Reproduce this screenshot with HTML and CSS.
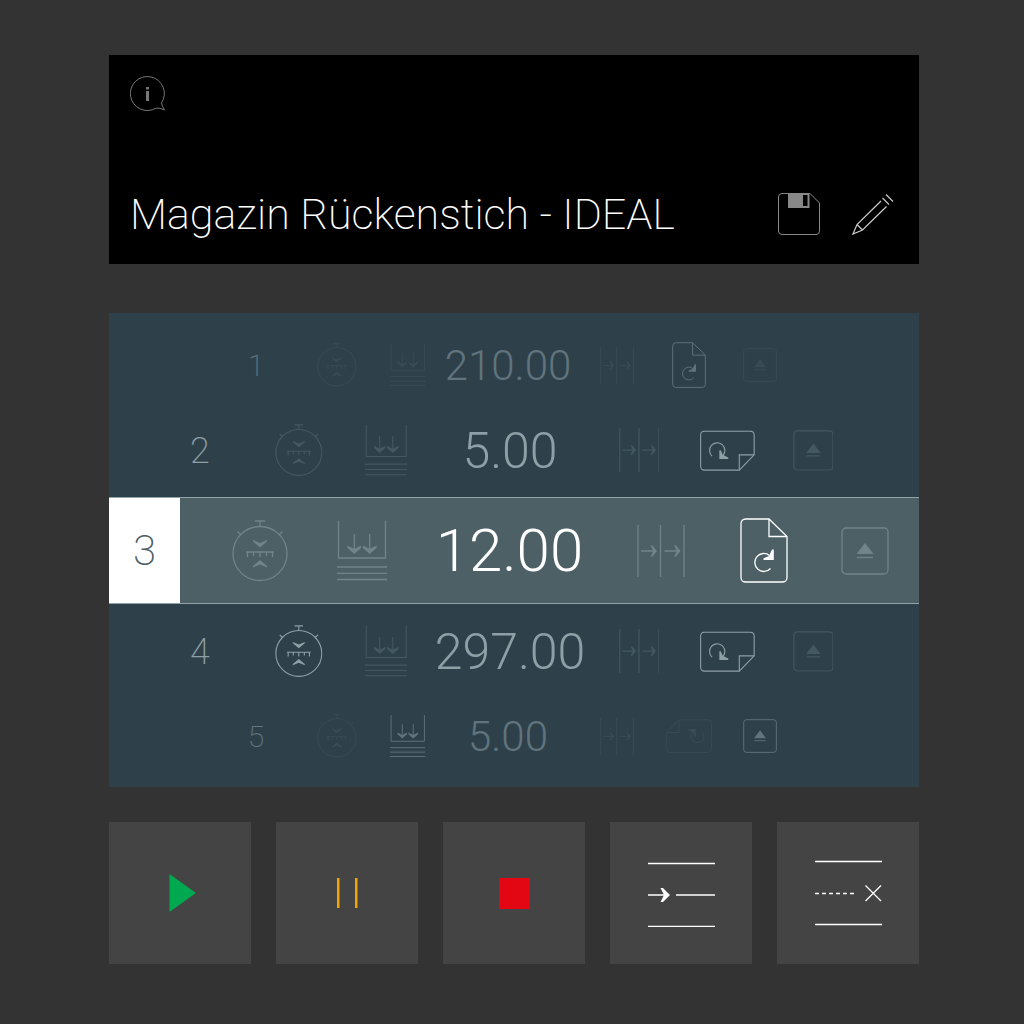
FILE: index.html
```html
<!DOCTYPE html>
<html lang="de">
<head>
    <meta charset="utf-8">
    <meta name="viewport" content="width=device-width, initial-scale=1">
    <title>Magazin Rückenstich - IDEAL</title>
    <link rel="stylesheet" href="styles.css">
</head>
<body>
    <!-- shared icons -->
    <svg class="sprite" aria-hidden="true">
        <symbol id="measure" viewBox="0 0 56 62">
            <circle cx="28" cy="33.5" r="27"/>
            <path d="M23 1H33M28 1V6.500M5.500 11.500L9 15M50.500 11.500L47 15"/>
            <path d="M14 32H42M15.500 32V37M21.500 32V36M28 32V37M34.500 32V36M40.500 32V37"/>
            <path class="solid" d="M21 20L28 23L35 20V21.500L28 27.500L21 21.500ZM21 47.500L28 44.500L35 47.500V46L28 40L21 46Z"/>
        </symbol>
        <symbol id="press" viewBox="0 0 50 60">
            <path d="M1.500 0V37H48.500V0M0 46H50M0 52.300H50M0 58.500H50M17.300 13V31M32.700 13V31"/>
            <path class="solid" d="M10.500 24.500L17.300 28L24 24.500V27L17.300 33L10.500 27ZM26 24.500L32.700 28L39.500 24.500V27L32.700 33L26 27Z"/>
        </symbol>
        <symbol id="feed" viewBox="0 0 48 52">
            <path d="M1 0V52M23.500 0V52M47 0V52M4 26H18M27.500 26H42"/>
            <path class="solid" d="M13.500 20.500H15.500L20 26L15.500 31.500H13.500L16.500 26ZM37 20.500H39L43.500 26L39 31.500H37L40 26Z"/>
        </symbol>
        <symbol id="sheet" viewBox="0 0 48 65">
            <path d="M5.500 1H29L47 18.500V59.500A4.500 4.500 0 0 1 42.500 64H5.500A4.500 4.500 0 0 1 1 59.500V5.500A4.500 4.500 0 0 1 5.500 1Z"/>
            <path d="M29 1V18.500H47"/>
            <path d="M30.500 50.500A9 9 0 1 1 29.500 37.500"/>
            <path class="solid" d="M32 31.500H33.800V42H23.500V40.300L29 38Z"/>
        </symbol>
        <symbol id="eject" viewBox="0 0 48 48">
            <rect x="1" y="1" width="46" height="46" rx="4"/>
            <path d="M16 30.500H32"/>
            <path class="solid" d="M15.500 27L24 16L32.500 27Z"/>
        </symbol>
    </svg>

    <main class="panel">
        <header class="job">
            <button class="icon-button" type="button" aria-label="Info">
                <svg class="info" width="36" height="36" viewBox="0 0 36 36">
                    <path d="M31.500 27A17 17 0 1 0 26 32.200Q29 31.500 34.500 34Q32 30 31.500 27Z"/>
                    <path class="solid" d="M16 11H19V13.500H16ZM16 15H19V25H16Z"/>
                </svg>
            </button>
            <div class="job-bar">
                <h1>Magazin Rückenstich - IDEAL</h1>
                <div class="job-actions">
                    <button class="icon-button" type="button" aria-label="Speichern">
                        <svg class="save" width="42" height="42" viewBox="0 0 42 42">
                            <path d="M4 .500H32L41.500 10V38A3.500 3.500 0 0 1 38 41.500H4A3.500 3.500 0 0 1 .500 38V4A3.500 3.500 0 0 1 4 .500Z"/>
                            <path class="solid" fill-rule="evenodd" d="M10 0H31.500V15H10ZM25 2V13H29.500V2Z"/>
                        </svg>
                    </button>
                    <button class="icon-button" type="button" aria-label="Bearbeiten">
                        <svg class="edit" width="42" height="42" viewBox="0 0 42 42">
                            <path d="M29 8L5 31.500L1 41L10.500 37L34.500 13.500M5 31.500L10.500 37M30.500 5L37 11.500M34 1.500L41 8.500"/>
                        </svg>
                    </button>
                </div>
            </div>
        </header>

        <ol class="steps">
            <li class="step far">
                <span class="number">1</span>
                <button type="button" aria-label="Messen"><svg class="measure"><use href="#measure"/></svg></button>
                <button type="button" aria-label="Pressen"><svg class="press"><use href="#press"/></svg></button>
                <span class="value">210.00</span>
                <button type="button" aria-label="Vorschub"><svg class="feed"><use href="#feed"/></svg></button>
                <button class="on" type="button" aria-label="Drehen"><svg class="sheet"><use href="#sheet"/></svg></button>
                <button type="button" aria-label="Auswerfen"><svg class="eject"><use href="#eject"/></svg></button>
            </li>
            <li class="step near">
                <span class="number">2</span>
                <button type="button" aria-label="Messen"><svg class="measure"><use href="#measure"/></svg></button>
                <button type="button" aria-label="Pressen"><svg class="press"><use href="#press"/></svg></button>
                <span class="value">5.00</span>
                <button type="button" aria-label="Vorschub"><svg class="feed"><use href="#feed"/></svg></button>
                <button class="on" type="button" aria-label="Drehen"><svg class="sheet turn-right"><use href="#sheet"/></svg></button>
                <button type="button" aria-label="Auswerfen"><svg class="eject"><use href="#eject"/></svg></button>
            </li>
            <li class="step current" aria-current="step">
                <span class="number">3</span>
                <button type="button" aria-label="Messen"><svg class="measure"><use href="#measure"/></svg></button>
                <button type="button" aria-label="Pressen"><svg class="press"><use href="#press"/></svg></button>
                <span class="value">12.00</span>
                <button type="button" aria-label="Vorschub"><svg class="feed"><use href="#feed"/></svg></button>
                <button class="on" type="button" aria-label="Drehen"><svg class="sheet"><use href="#sheet"/></svg></button>
                <button type="button" aria-label="Auswerfen"><svg class="eject"><use href="#eject"/></svg></button>
            </li>
            <li class="step near">
                <span class="number">4</span>
                <button class="on" type="button" aria-label="Messen"><svg class="measure"><use href="#measure"/></svg></button>
                <button type="button" aria-label="Pressen"><svg class="press"><use href="#press"/></svg></button>
                <span class="value">297.00</span>
                <button type="button" aria-label="Vorschub"><svg class="feed"><use href="#feed"/></svg></button>
                <button class="on" type="button" aria-label="Drehen"><svg class="sheet turn-right"><use href="#sheet"/></svg></button>
                <button type="button" aria-label="Auswerfen"><svg class="eject"><use href="#eject"/></svg></button>
            </li>
            <li class="step far">
                <span class="number">5</span>
                <button type="button" aria-label="Messen"><svg class="measure"><use href="#measure"/></svg></button>
                <button class="on" type="button" aria-label="Pressen"><svg class="press"><use href="#press"/></svg></button>
                <span class="value">5.00</span>
                <button type="button" aria-label="Vorschub"><svg class="feed"><use href="#feed"/></svg></button>
                <button type="button" aria-label="Drehen"><svg class="sheet turn-left"><use href="#sheet"/></svg></button>
                <button class="on" type="button" aria-label="Auswerfen"><svg class="eject"><use href="#eject"/></svg></button>
            </li>
        </ol>

        <div class="controls">
            <button class="control play" type="button" aria-label="Start">
                <svg width="32" height="38" viewBox="0 0 32 38"><path class="solid" d="M5.500 0L32 19L5.500 38Z"/></svg>
            </button>
            <button class="control pause" type="button" aria-label="Pause">
                <svg width="22" height="30" viewBox="0 0 22 30"><path class="solid" d="M1 0H3.500V30H1ZM19 0H21.500V30H19Z"/></svg>
            </button>
            <button class="control stop" type="button" aria-label="Stopp">
                <svg width="31" height="31" viewBox="0 0 31 31"><path class="solid" d="M0 0H31V31H0Z"/></svg>
            </button>
            <button class="control" type="button" aria-label="Schritt einfügen">
                <svg width="67" height="68" viewBox="0 0 67 68">
                    <path d="M0 4.500H67M0 36H18M28 36H67M0 67.300H67"/>
                    <path class="solid" d="M12.500 29H15L22 36L15 43H12.500L16 36Z"/>
                </svg>
            </button>
            <button class="control" type="button" aria-label="Schritt löschen">
                <svg width="67" height="68" viewBox="0 0 67 68">
                    <path d="M0 2.500H67M0 65.500H67M50.500 26.500L66 42M66 26.500L50.500 42"/>
                    <path stroke-dasharray="4 3" d="M0 34.500H40"/>
                </svg>
            </button>
        </div>
    </main>
</body>
</html>
```

FILE: styles.css
```css
* {
    box-sizing: border-box;
}
body {
    margin: 0;
    background: #333;
    color: #fff;
    font-family: Roboto, "Liberation Sans", sans-serif;
    font-weight: 200;
}
button {
    padding: 0;
    border: 0;
    background: none;
    color: inherit;
    font: inherit;
    cursor: pointer;
}
svg {
    display: block;
    fill: none;
    stroke: currentColor;
    stroke-width: 1.3;
}
.solid {
    fill: currentColor;
    stroke: none;
}
.sprite {
    position: absolute;
    width: 0;
    height: 0;
}
.panel {
    padding: 55px 105px 60px 109px;
}

/* job header */
.job {
    display: flex;
    flex-direction: column;
    align-items: flex-start;
    justify-content: space-between;
    min-height: 209px;
    padding: 21px 25px 25px 21px;
    background: #000;
}
.job-bar {
    display: flex;
    align-items: center;
    justify-content: space-between;
    width: 100%;
}
h1 {
    margin: 0;
    font-size: 43px;
    line-height: 50px;
    font-weight: 200;
}
.job-actions {
    display: flex;
    gap: 32px;
}
.info {
    stroke-width: 1;
    color: #777;
}
.save {
    stroke-width: 1;
    color: #888;
}
.edit {
    stroke-width: 1.2;
    color: #ccc;
}

/* step wheel */
.steps {
    margin: 49px 0 35px;
    padding: 10px 0 8px;
    list-style: none;
    background: #2e414b;
}
.step {
    --scale: 1;
    display: grid;
    align-items: center;
    justify-items: center;
}
.number,
.value {
    white-space: nowrap;
}
.value {
    font-weight: 300;
}
.far {
    --scale: 0.71;
    grid-template-columns: 90fr 72fr 70fr 130fr 88fr 56fr 86fr;
    height: 85px;
    padding: 0 116px 0 102px;
    color: #61747d;
}
.near {
    --scale: 0.85;
    grid-template-columns: 100fr 98fr 76fr 172fr 86fr 90fr 82fr;
    height: 85px;
    padding: 0 65px 0 41px;
    color: #8f9fa6;
}
.current {
    grid-template-columns: 71px 131fr 102fr 192fr 110fr 96fr 107fr;
    height: 107px;
    margin: 4px 0 5px;
    border-top: 1px solid #92a3a8;
    border-bottom: 1px solid #92a3a8;
    background: #4d6065;
}
.current .number {
    display: flex;
    align-items: center;
    justify-content: center;
    align-self: stretch;
    justify-self: stretch;
    background: #fff;
    color: #4d6065;
    font-size: 42px;
}
.current .number + button {
    margin-left: 29px;
}
.near .number {
    font-size: 36px;
}
.far .number {
    font-size: 30px;
}
.current .value {
    font-size: 60px;
}
.near .value {
    font-size: 50px;
}
.far .value {
    font-size: 42px;
}
.far button {
    color: #394c56;
}
.near button {
    color: #445862;
}
.current button {
    color: #70848a;
}
.step .on {
    color: inherit;
}

/* icon sizes follow the row */
.measure {
    width: calc(56px * var(--scale));
    height: calc(62px * var(--scale));
}
.press {
    width: calc(50px * var(--scale));
    height: calc(60px * var(--scale));
}
.feed {
    width: calc(48px * var(--scale));
    height: calc(52px * var(--scale));
}
.sheet {
    width: calc(48px * var(--scale));
    height: calc(65px * var(--scale));
}
.eject {
    width: calc(48px * var(--scale));
    height: calc(48px * var(--scale));
}
.turn-right {
    transform: rotate(90deg);
}
.turn-left {
    transform: rotate(-90deg);
}

/* machine controls */
.controls {
    display: grid;
    grid-template-columns: repeat(5, 1fr);
    gap: 25px;
}
.control {
    display: flex;
    align-items: center;
    justify-content: center;
    aspect-ratio: 1;
    background: #444;
}
.play {
    color: #00a94f;
}
.pause {
    color: #f5a400;
}
.stop {
    color: #e30613;
}
```
